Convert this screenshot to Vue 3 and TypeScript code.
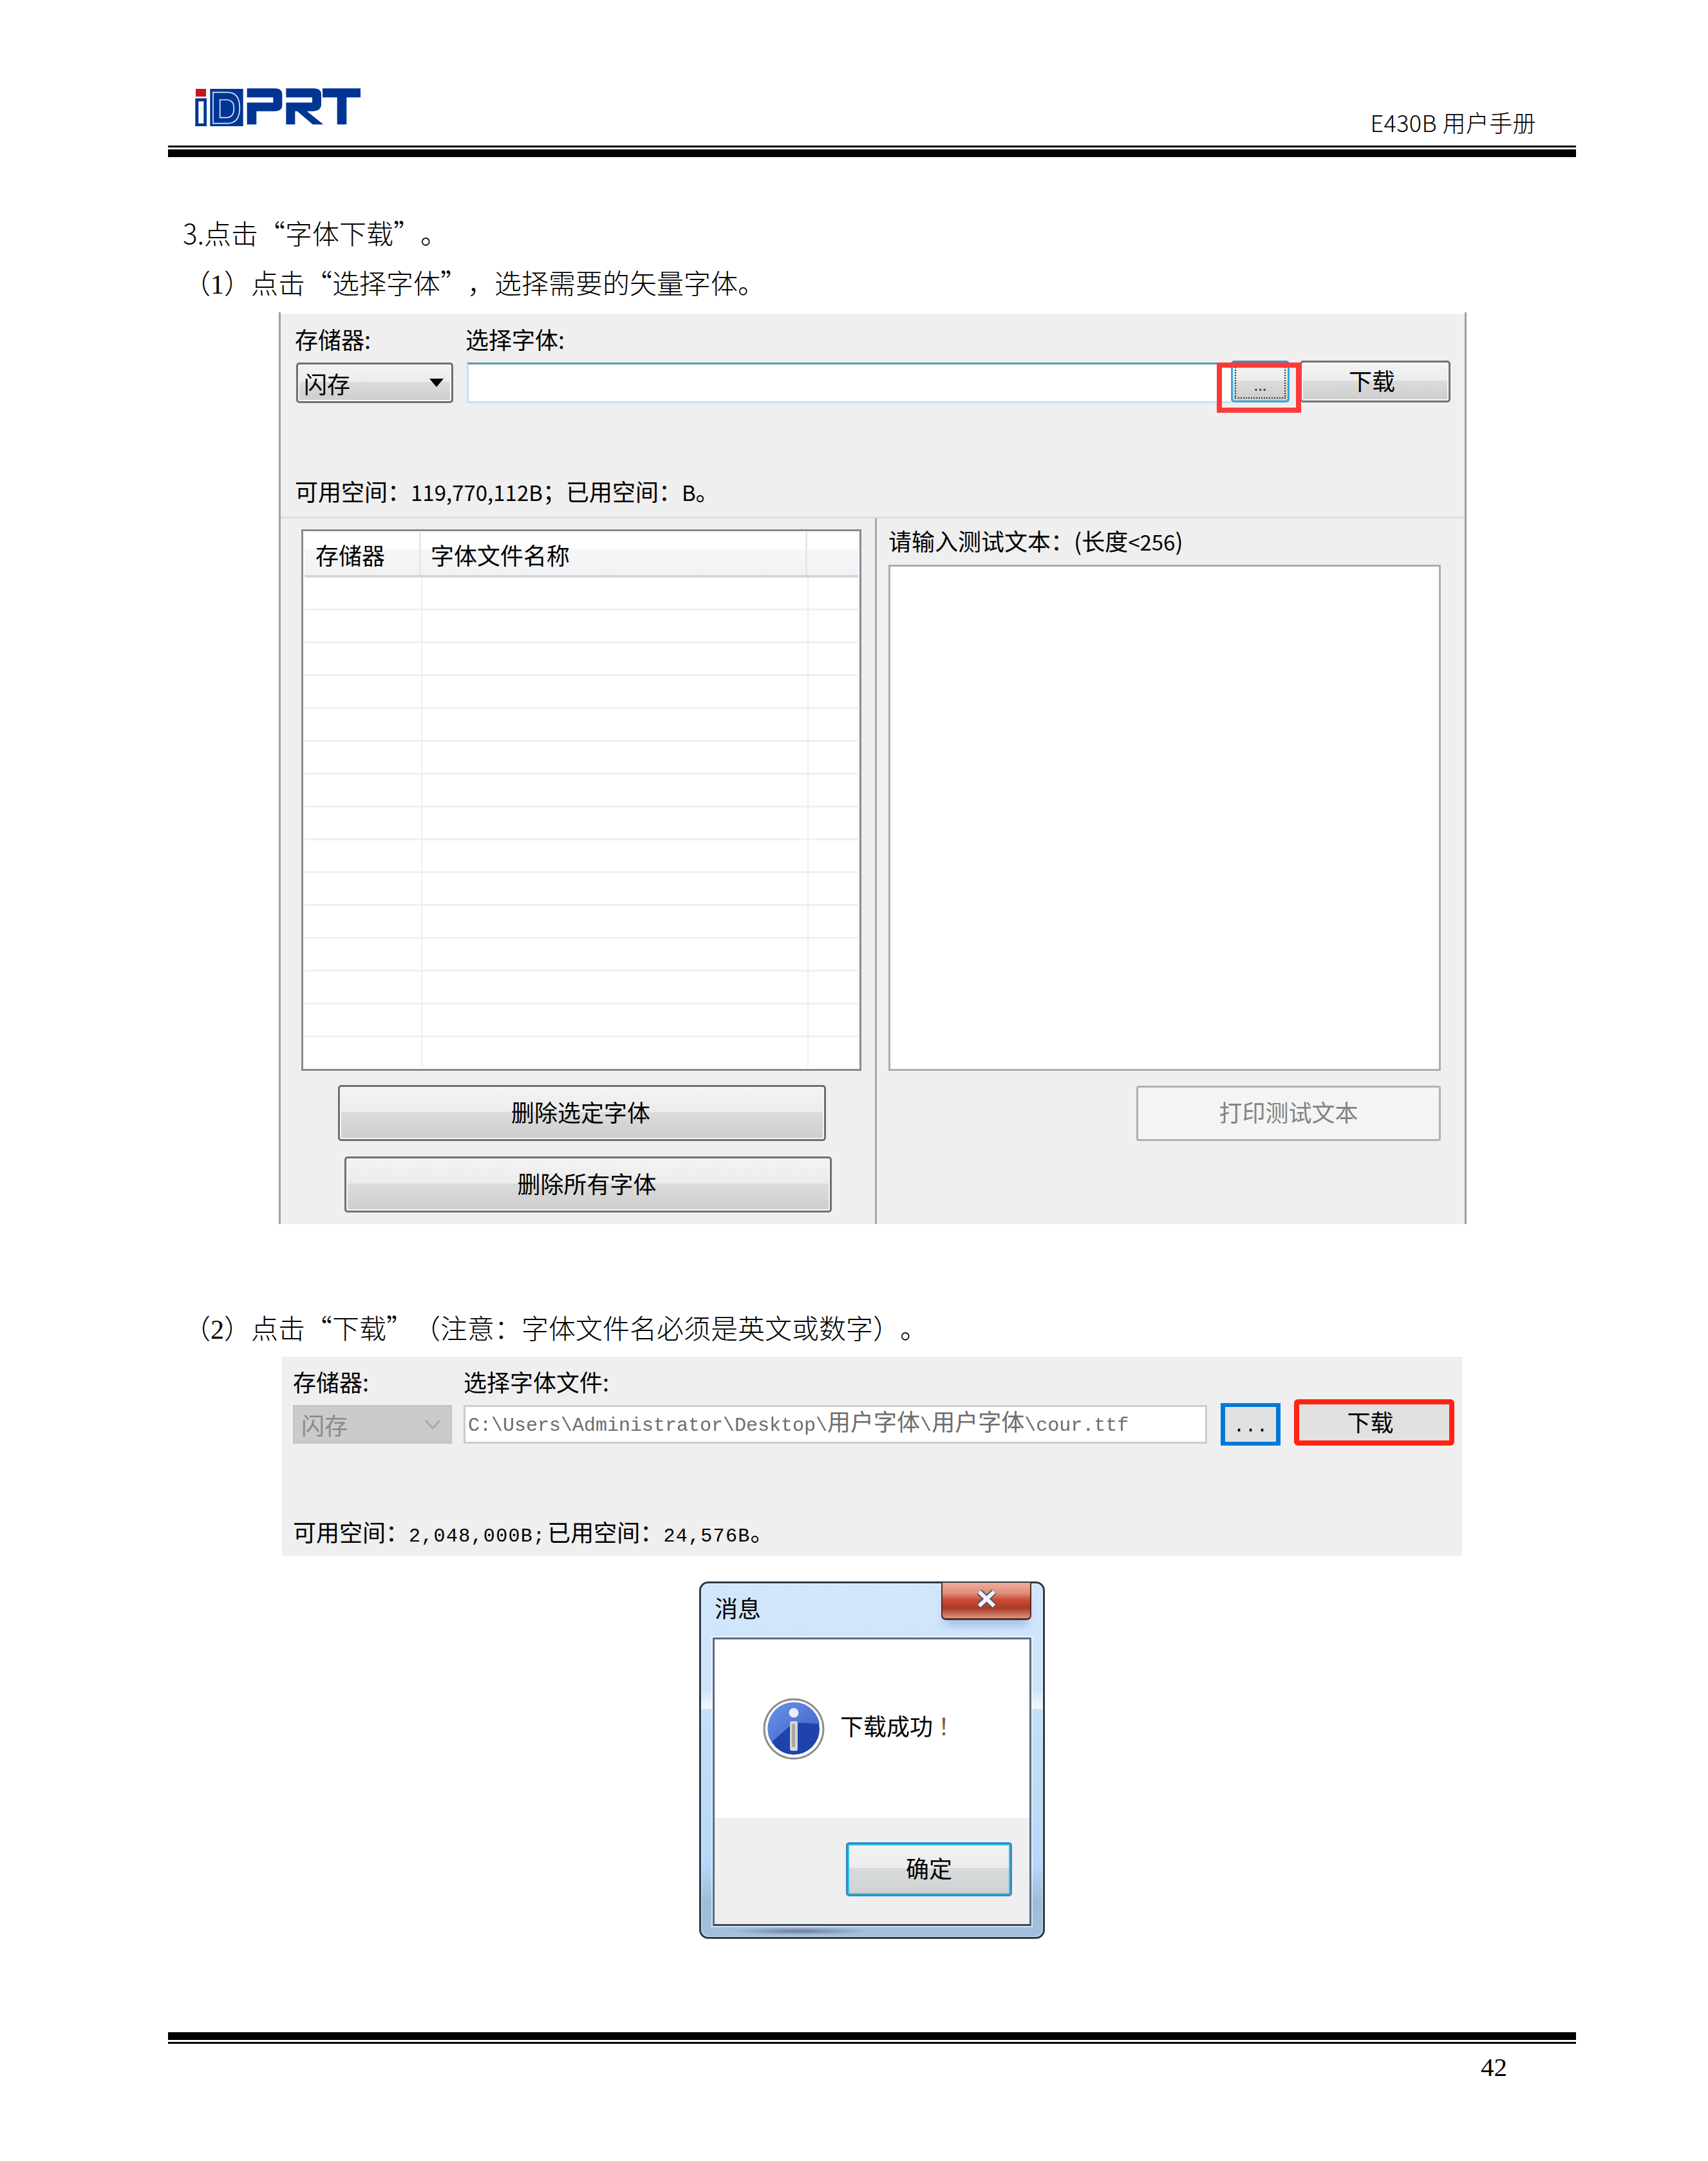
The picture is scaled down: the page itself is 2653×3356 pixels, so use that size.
<script setup lang="ts">
const rows = Array.from({ length: 15 }, (_, i) => i)
</script>

<template>
  <div class="page" lang="zh-CN">
    <header class="head">
      <svg class="logo" viewBox="0 0 825 225" aria-label="iDPRT">
        <rect x="27" y="24" width="48" height="36" fill="#c8161d" />
        <rect x="25" y="68" width="53" height="130" fill="#003594" />
        <rect x="40" y="82" width="24" height="103" fill="#fff" />
        <rect x="94" y="24" width="154" height="174" fill="#003594" />
        <path d="M108 40H175Q232 40 232 112Q232 185 175 185H108Z" fill="none" stroke="#dfe6f4" stroke-width="5" />
        <path d="M140 75H170Q205 75 205 115Q205 158 170 158H140Z" fill="none" stroke="#dfe6f4" stroke-width="5" />
        <path d="M266 22H395Q430 22 430 50V100Q430 128 395 128H310V190H266V88H388V64H266Z" fill="#003594" />
        <path d="M448 22H575Q612 22 612 50V95Q612 125 575 128H545L622 190H572L500 128H490V190H448V88H570V64H448Z" fill="#003594" />
        <path d="M618 22H795V64H730V190H686V64H618Z" fill="#003594" />
      </svg>
      <div class="doc-title">E430B 用户手册</div>
    </header>
    <div class="rule-thin"></div>
    <div class="rule-thick"></div>

    <p class="step first">3.点击“字体下载”。</p>
    <p class="step sub">（<span class="serif">1</span>）点击“选择字体”，选择需要的矢量字体。</p>

    <section class="win">
      <div class="win-top">
        <div class="labels">
          <span class="col-store">存储器:</span>
          <span>选择字体:</span>
        </div>
        <div class="controls">
          <div class="select">
            <span>闪存</span>
            <i class="caret"></i>
          </div>
          <div class="path-input"></div>
          <button class="btn browse"><span class="focus">...</span></button>
          <button class="btn download">下载</button>
        </div>
        <div class="space">可用空间：<span class="nums">119,770,112B</span>；已用空间：<span class="nums">B</span>。</div>
      </div>

      <div class="win-body">
        <div class="left">
          <div class="table">
            <div class="thead">
              <div class="th">存储器</div>
              <div class="th">字体文件名称</div>
              <div class="th"></div>
            </div>
            <div class="tbody">
              <div v-for="r in rows" :key="r" class="tr">
                <div class="td"></div>
                <div class="td"></div>
                <div class="td"></div>
              </div>
            </div>
          </div>
          <button class="btn del-one">删除选定字体</button>
          <button class="btn del-all">删除所有字体</button>
        </div>
        <div class="right">
          <div class="test-label">请输入测试文本：(长度<span class="nums">&lt;256</span>)</div>
          <div class="test-box"></div>
          <button class="print" disabled>打印测试文本</button>
        </div>
      </div>
    </section>

    <p class="step sub second">（<span class="serif">2</span>）点击“下载”（注意：字体文件名必须是英文或数字）。</p>

    <section class="win2">
      <div class="labels">
        <span class="col-store">存储器:</span>
        <span>选择字体文件:</span>
      </div>
      <div class="controls2">
        <div class="select2">
          <span>闪存</span>
          <svg class="chev" viewBox="0 0 26 16"><path d="M2 2L13 14L24 2" fill="none" stroke="#a9a9a9" stroke-width="3" /></svg>
        </div>
        <div class="path2">C:\Users\Administrator\Desktop\<span class="cjk">用户字体</span>\<span class="cjk">用户字体</span>\cour.ttf</div>
        <button class="blue-btn">...</button>
        <button class="red-btn">下载</button>
      </div>
      <div class="space2">可用空间：<span class="mono semi">2,048,000B;</span>已用空间：<span class="mono">24,576B</span>。</div>
    </section>

    <section class="dialog">
      <div class="dlg-title">消息</div>
      <div class="dlg-close">
        <svg viewBox="0 0 33 30" class="x-icon">
          <path d="M5 4L28 26M28 4L5 26" stroke="#4b5464" stroke-width="10" fill="none" />
          <path d="M5 4L28 26M28 4L5 26" stroke="#f4f4f6" stroke-width="6" fill="none" />
        </svg>
      </div>
      <div class="dlg-inner">
        <div class="dlg-msg">
          <svg class="info" viewBox="0 0 96 96">
            <defs>
              <linearGradient id="infoTop" x1="0" y1="0" x2="1" y2="1">
                <stop offset="0" stop-color="#6d92e6" />
                <stop offset="1" stop-color="#3a62c6" />
              </linearGradient>
            </defs>
            <circle cx="48" cy="48" r="46" fill="#fff" stroke="#8c8c8c" stroke-width="3" />
            <circle cx="48" cy="48" r="40" fill="#1f43ac" />
            <path d="M8 54A40 40 0 0 1 88 40L48 38L14 68Q8 60 8 54Z" fill="url(#infoTop)" />
            <circle cx="48" cy="23" r="7.5" fill="#e8eefb" />
            <rect x="42" y="36" width="12" height="46" rx="3" fill="#d6d6d6" />
            <rect x="45" y="40" width="5" height="36" fill="#a8a8a8" />
          </svg>
          <span class="msg-text">下载成功<span class="bang">！</span></span>
        </div>
        <div class="dlg-foot">
          <button class="ok">确定</button>
        </div>
      </div>
    </section>

    <div class="rule-thick foot-thick"></div>
    <div class="rule-thin foot-thin"></div>
    <div class="page-no">42</div>
  </div>
</template>

<style scoped>
.page {
  width: 2653px;
  height: 3356px;
  box-sizing: border-box;
  padding-top: 130px;
  background: #fff;
  color: #000;
  font-family: "Noto Sans CJK SC", "Noto Sans", sans-serif;
  text-spacing-trim: space-all;
  overflow: hidden;
}

.head {
  display: flex;
  height: 96px;
  margin-left: 261px;
  width: 2187px;
}

.logo {
  width: 275px;
  height: 75px;
  margin-left: 34px;
}

.doc-title {
  margin: 41px 62px 0 auto;
  font-size: 36px;
  line-height: 36px;
  letter-spacing: 0.4px;
  font-weight: 300;
  white-space: pre;
}

.rule-thin {
  height: 3px;
  margin-left: 261px;
  width: 2187px;
  background: #000;
}

.rule-thick {
  height: 12px;
  margin: 3px 0 0 261px;
  width: 2187px;
  background: #000;
}

.step {
  height: 50px;
  margin: 0;
  font-size: 42px;
  font-weight: 300;
  white-space: nowrap;
}

.first {
  margin: 94px 0 0 284px;
  line-height: 46px;
}

.sub {
  margin: 29px 0 0 285px;
  line-height: 42px;
}

.serif {
  font-family: "Liberation Serif", serif;
}

.win {
  margin: 18px 0 0 433px;
  width: 1845px;
  height: 1416px;
  box-sizing: border-box;
  border-left: 3px solid #a0a0a0;
  border-right: 3px solid #a0a0a0;
  padding-top: 3px;
  background: linear-gradient(#fff 3px, #efefef 3px);
  font-size: 36px;
}

.win-top {
  padding: 22px 0 19px 22px;
  border-bottom: 3px solid #d5dfe6;
  line-height: 36px;
}

.labels {
  display: flex;
  height: 36px;
  font-size: 36px;
  line-height: 32px;
  white-space: nowrap;
}

.col-store {
  width: 265px;
}

.controls {
  display: flex;
  align-items: flex-start;
  margin-top: 14px;
  padding-right: 22px;
}

.select {
  display: flex;
  align-items: center;
  justify-content: space-between;
  width: 244px;
  height: 63px;
  margin: 3px 0 0 2px;
  padding: 0 12px 0 9px;
  box-sizing: border-box;
  border: 3px solid #707070;
  border-radius: 5px;
  background: linear-gradient(#f3f3f3, #ececec 48%, #dcdcdc 48%, #cdcdcd);
  box-shadow: inset 0 0 0 2px #f7f7f7;
  line-height: 50px;
}

.caret {
  width: 0;
  height: 0;
  border-left: 11px solid transparent;
  border-right: 11px solid transparent;
  border-top: 13px solid #000;
}

.path-input {
  flex: 1;
  height: 63px;
  margin: 3px 0 0 21px;
  box-sizing: border-box;
  border-top: 3px solid #5a95bf;
  border-left: 3px solid #c6e2f2;
  border-bottom: 3px solid #c6e2f2;
  background: #fff;
}

.btn {
  display: block;
  padding: 0 0 6px;
  box-sizing: border-box;
  border: 3px solid #707070;
  border-radius: 5px;
  background: linear-gradient(#f3f3f3, #ececec 48%, #dcdcdc 48%, #cdcdcd);
  box-shadow: inset 0 0 0 2px #f7f7f7;
  color: #000;
  font-family: inherit;
  font-size: 36px;
}

.browse {
  position: relative;
  width: 91px;
  height: 65px;
  padding: 0;
  border-color: #3f8dbd #33a9dc #33a9dc;
  font-size: 24px;
  color: #333;
  box-shadow: none;
}

.browse::after {
  content: "";
  position: absolute;
  left: -25px;
  top: 0;
  width: 131px;
  height: 78px;
  box-sizing: border-box;
  border: 8px solid #fb3a3a;
}

.focus {
  display: block;
  height: 52px;
  margin: 2px 3px;
  padding-top: 10px;
  box-sizing: border-box;
  border: 2px dotted #333;
  border-top-color: transparent;
  line-height: 36px;
}

.download {
  width: 234px;
  height: 65px;
  margin-left: 16px;
  padding-right: 10px;
}

.space {
  height: 36px;
  margin-top: 121px;
  line-height: 30px;
  white-space: nowrap;
}

.nums {
  font-size: 33px;
}

.win-body {
  display: flex;
  height: 1096px;
}

.left {
  width: 923px;
  padding-top: 17px;
  box-sizing: border-box;
  border-right: 0;
}

.table {
  width: 870px;
  height: 841px;
  margin-left: 32px;
  padding: 2px;
  box-sizing: border-box;
  border: 3px solid #858b94;
  background: #fff;
}

.thead,
.tr {
  display: grid;
  grid-template-columns: 181px 600px 1fr;
}

.tr {
  grid-template-columns: 183px 600px 1fr;
}

.thead {
  height: 70px;
  box-sizing: border-box;
  border-bottom: 4px solid #d5d5d5;
  background: linear-gradient(#fff 40%, #f6f7f9 40%, #f1f2f4);
}

.th {
  padding: 16px 0 0 15px;
  line-height: 36px;
  border-right: 3px solid #e6e7e9;
}

.th:first-child {
  padding-left: 17px;
}

.th:last-child {
  border-right: 0;
}

.tbody {
  height: 760px;
  overflow: hidden;
}

.tr {
  height: 51px;
  box-sizing: border-box;
  border-bottom: 3px solid #f0f0f0;
}

.td {
  border-right: 2px solid #eeeeee;
}

.td:last-child {
  border-right: 0;
}

.del-one {
  width: 758px;
  height: 87px;
  margin: 22px 0 0 89px;
  padding-right: 4px;
}

.del-all {
  width: 757px;
  height: 87px;
  margin: 24px 0 0 99px;
  padding-right: 4px;
}

.right {
  flex: 1;
  display: flex;
  flex-direction: column;
  padding: 18px 0 0 18px;
  border-left: 3px solid #a9a9a9;
  box-sizing: border-box;
}

.test-label {
  height: 36px;
  line-height: 32px;
  white-space: nowrap;
}

.test-box {
  width: 858px;
  height: 786px;
  margin-top: 18px;
  box-sizing: border-box;
  border: 3px solid #abadb3;
  background: #fff;
}

.print {
  width: 473px;
  height: 86px;
  margin: 23px 0 0 385px;
  padding: 0 0 6px;
  box-sizing: border-box;
  border: 3px solid #adb2b5;
  border-radius: 4px;
  background: #f4f4f4;
  color: #838383;
  font-family: inherit;
  font-size: 36px;
}

.second {
  margin-top: 135px;
  line-height: 50px;
}

.win2 {
  width: 1833px;
  height: 309px;
  margin: 21px 0 0 438px;
  padding: 22px 0 0 17px;
  box-sizing: border-box;
  background: #efefef;
  font-size: 36px;
}

.controls2 {
  display: flex;
  align-items: flex-start;
  margin-top: 8px;
}

.select2 {
  display: flex;
  align-items: center;
  justify-content: space-between;
  width: 247px;
  height: 60px;
  margin-top: 9px;
  padding: 0 14px 0 10px;
  box-sizing: border-box;
  border: 3px solid #c4c4c4;
  background: #cbcbcb;
  color: #8a8a8a;
  line-height: 48px;
}

.chev {
  width: 26px;
  height: 16px;
}

.path2 {
  width: 1155px;
  height: 60px;
  margin: 9px 0 0 18px;
  padding-left: 4px;
  box-sizing: border-box;
  border: 3px solid #cccccc;
  background: #fff;
  color: #6d6d6d;
  font-family: "Liberation Mono", monospace;
  font-size: 30px;
  line-height: 42px;
  white-space: nowrap;
}

.cjk {
  font-family: "Noto Sans CJK SC", sans-serif;
  font-size: 36px;
}

.blue-btn {
  width: 93px;
  height: 66px;
  margin: 6px 0 0 21px;
  padding: 6px 0 0;
  box-sizing: border-box;
  border: solid #0078d7;
  border-width: 6px 7px;
  background: #e1e1e1;
  font-family: "Liberation Mono", monospace;
  font-size: 30px;
  color: #000;
}

.red-btn {
  width: 249px;
  height: 72px;
  margin-left: 21px;
  padding: 0 12px 6px 0;
  box-sizing: border-box;
  border: 8px solid #ff2314;
  border-radius: 6px;
  background: #e1e1e1;
  color: #000;
  font-family: inherit;
  font-size: 36px;
}

.space2 {
  height: 36px;
  margin-top: 117px;
  line-height: 32px;
  white-space: nowrap;
}

.mono {
  font-family: "Liberation Mono", monospace;
  font-size: 30px;
  letter-spacing: 1.3px;
}

.semi {
  margin-right: 3px;
}

.dialog {
  position: relative;
  width: 537px;
  height: 555px;
  margin: 40px 0 0 1086px;
  padding: 0 18px;
  box-sizing: border-box;
  border: 3px solid #2c3a46;
  border-radius: 14px;
  background: linear-gradient(#d2e6fc, #cfe4fb 30%, #f2f8fe 35.5%, #c4dffa 35.6%, #b8d7f8 80%, #9dbcd9 90%, #a4c0df);
  box-shadow: inset 0 0 0 1px rgba(255, 255, 255, 0.6);
}

.dialog::after {
  content: "";
  position: absolute;
  left: 45px;
  bottom: 3px;
  width: 215px;
  height: 12px;
  background: radial-gradient(closest-side, rgba(80, 100, 125, 0.7), rgba(80, 100, 125, 0));
}

.dlg-title {
  height: 84px;
  padding: 19px 0 0 3px;
  box-sizing: border-box;
  font-size: 36px;
  line-height: 36px;
}

.dlg-close {
  position: absolute;
  top: -1px;
  right: 18px;
  width: 140px;
  height: 58px;
  display: flex;
  align-items: center;
  justify-content: center;
  box-sizing: border-box;
  border: solid #5c2a24;
  border-width: 0 2px 3px;
  border-radius: 0 0 7px 7px;
  background: linear-gradient(#f2ad9d, #dc8d7b 30%, #cd4b31 48%, #a83c28 72%, #dd957f);
  box-shadow: 0 14px 14px -6px rgba(120, 160, 205, 0.55);
}

.x-icon {
  width: 33px;
  height: 30px;
  margin-bottom: 6px;
}

.dlg-inner {
  display: flex;
  flex-direction: column;
  height: 448px;
  box-sizing: border-box;
  border: 3px solid #5a6d80;
  border-bottom-color: #3e4a58;
  box-shadow: 0 0 0 2px rgba(255, 255, 255, 0.55);
}

.dlg-msg {
  display: flex;
  align-items: center;
  height: 277px;
  padding-left: 75px;
  box-sizing: border-box;
  background: #fff;
}

.info {
  width: 96px;
  height: 96px;
}

.msg-text {
  margin: 0 0 12px 24px;
  font-size: 36px;
  line-height: 40px;
  white-space: nowrap;
}

.bang {
  margin-left: 8px;
  font-family: "Noto Sans CJK TC", sans-serif;
  color: #8a5a30;
}

.dlg-foot {
  flex: 1;
  display: flex;
  justify-content: flex-end;
  padding: 38px 27px 0 0;
  background: #efefef;
}

.ok {
  width: 258px;
  height: 84px;
  padding: 0 0 6px;
  box-sizing: border-box;
  border: 3px solid #3888bd;
  border-radius: 5px;
  background: linear-gradient(#f2f3f3, #ebecec 48%, #d8dadb 48%, #cfd2d2);
  box-shadow: inset 0 0 0 2px #2fc3ee;
  color: #000;
  font-family: inherit;
  font-size: 36px;
}

.foot-thick {
  margin-top: 145px;
}

.foot-thin {
  margin-top: 3px;
}

.page-no {
  margin: 16px 0 0 2300px;
  font-family: "Liberation Serif", serif;
  font-size: 41px;
  line-height: 41px;
}
</style>
